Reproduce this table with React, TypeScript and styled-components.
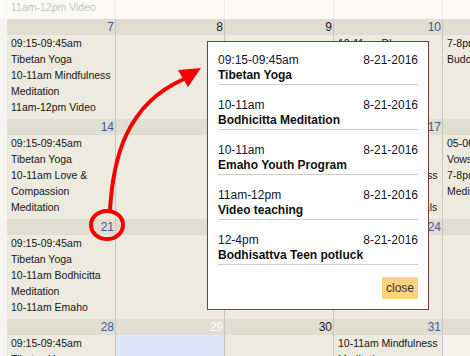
import styled, { createGlobalStyle } from "styled-components";

type Tone = "link" | "plain" | "today";
type Kind = "normal" | "today" | "outside";

interface IDay {
  date: number;
  tone: Tone;
  kind?: Kind;
  events: string[];
}

interface IAgendaItem {
  time: string;
  date: string;
  title: string;
}

const GlobalStyle = createGlobalStyle`
  *, *::before, *::after { box-sizing: border-box; }
  html, body {
    margin: 0;
    padding: 0;
    background: #f5f4ee;
    font-family: "Liberation Sans", Arial, sans-serif;
  }
`;

const Page = styled.div`
  position: relative;
  width: 470px;
  height: 356px;
  overflow: hidden;
  padding-left: 7px;
  background: #f5f4ee;
`;

const Calendar = styled.div`
  display: flex;
  flex-direction: column;
  width: 544px;
`;

const Row = styled.div`
  display: grid;
  grid-template-columns: 108px repeat(4, 109px);
`;

const Day = styled.div`
  display: flex;
  flex-direction: column;
  & + & {
    border-left: 1px solid #c8c6be;
  }
`;

const DayHead = styled.div<{ $tone: Tone }>`
  height: 16px;
  line-height: 16px;
  padding-right: 1px;
  text-align: right;
  font-size: 12px;
  background: #e0ddd1;
  color: ${(p) =>
    p.$tone === "link" ? "#40599a" : p.$tone === "today" ? "#ffffff" : "#1c1c1c"};
`;

const DayBody = styled.div<{ $kind: Kind }>`
  height: 84px;
  overflow: hidden;
  padding: 0 2px 0 4px;
  font-size: 10.5px;
  line-height: 16px;
  color: #161616;
  background: ${(p) =>
    p.$kind === "today" ? "#e0e6fa" : p.$kind === "outside" ? "#f5f4ee" : "#edeadf"};
`;

const TailBody = styled.div`
  height: 19px;
  overflow: hidden;
  display: flex;
  flex-direction: column;
  justify-content: flex-end;
  padding: 0 2px 4px 4px;
  font-size: 10.5px;
  line-height: 16px;
  color: #161616;
  background: #edeadf;
`;

const Event = styled.div``;

const Fade = styled.div`
  position: absolute;
  left: 0;
  top: 0;
  width: 100%;
  height: 19px;
  background: rgba(255, 255, 255, 0.72);
`;

const Pointer = styled.svg`
  position: absolute;
  left: 0;
  top: 0;
  pointer-events: none;
`;

const Popup = styled.div`
  position: absolute;
  left: 207px;
  top: 41px;
  width: 222px;
  padding: 10px;
  background: #ffffff;
  border: 1px solid #7a3b3b;
  color: #111;
  font-size: 12px;
`;

const Item = styled.div`
  padding-bottom: 1px;
  margin-bottom: 12px;
  border-bottom: 1px solid #cccccc;
`;

const Meta = styled.div`
  display: flex;
  justify-content: space-between;
  line-height: 16px;
  color: #10182c;
`;

const Title = styled.div`
  font-weight: bold;
  line-height: 15px;
`;

const Actions = styled.div`
  display: flex;
  justify-content: flex-end;
`;

const CloseButton = styled.button`
  height: 22px;
  padding: 0 4px;
  border: none;
  background: #fed27f;
  color: #333;
  font-family: inherit;
  font-size: 12px;
  line-height: 22px;
  cursor: pointer;
`;

const weeks: IDay[][] = [
  [
    { date: 7, tone: "link", events: ["09:15-09:45am Tibetan Yoga", "10-11am Mindfulness Meditation", "11am-12pm Video teaching"] },
    { date: 8, tone: "plain", events: [] },
    { date: 9, tone: "plain", events: [] },
    { date: 10, tone: "link", events: ["10-11am Dharma Talk"] },
    { date: 11, tone: "link", events: ["7-8pm Medicine Buddha Puja"] },
  ],
  [
    { date: 14, tone: "link", events: ["09:15-09:45am Tibetan Yoga", "10-11am Love & Compassion Meditation"] },
    { date: 15, tone: "plain", events: [] },
    { date: 16, tone: "plain", events: [] },
    { date: 17, tone: "link", events: ["09:15-09:45am Tibetan Yoga", "10-11am Mindfulness Meditation", "7-8pm Fundamentals"] },
    { date: 18, tone: "link", events: ["05-06am Bodhisattva Vows", "7-8pm Mindfulness Meditation"] },
  ],
  [
    { date: 21, tone: "link", events: ["09:15-09:45am Tibetan Yoga", "10-11am Bodhicitta Meditation", "10-11am Emaho Youth Program"] },
    { date: 22, tone: "plain", events: [] },
    { date: 23, tone: "plain", events: [] },
    { date: 24, tone: "link", events: [] },
    { date: 25, tone: "plain", events: [] },
  ],
  [
    { date: 28, tone: "link", events: ["09:15-09:45am Tibetan Yoga"] },
    { date: 29, tone: "today", kind: "today", events: [] },
    { date: 30, tone: "plain", events: [] },
    { date: 31, tone: "link", events: ["10-11am Mindfulness Meditation"] },
    { date: 1, tone: "plain", kind: "outside", events: [] },
  ],
];

const agenda: IAgendaItem[] = [
  { time: "09:15-09:45am", date: "8-21-2016", title: "Tibetan Yoga" },
  { time: "10-11am", date: "8-21-2016", title: "Bodhicitta Meditation" },
  { time: "10-11am", date: "8-21-2016", title: "Emaho Youth Program" },
  { time: "11am-12pm", date: "8-21-2016", title: "Video teaching" },
  { time: "12-4pm", date: "8-21-2016", title: "Bodhisattva Teen potluck" },
];

function App() {
  return (
    <>
      <GlobalStyle />
      <Page>
        <Calendar>
          {/* tail of the previous week, scrolled mostly out of view */}
          <Row>
            <Day>
              <TailBody>
                <Event>11am-12pm Video</Event>
              </TailBody>
            </Day>
            {[0, 1, 2, 3].map((i) => (
              <Day key={i}>
                <TailBody />
              </Day>
            ))}
          </Row>
          {weeks.map((week, w) => (
            <Row key={w}>
              {week.map((day) => (
                <Day key={day.date}>
                  <DayHead $tone={day.tone}>{day.date}</DayHead>
                  <DayBody $kind={day.kind ?? "normal"}>
                    {day.events.map((ev) => (
                      <Event key={ev}>{ev}</Event>
                    ))}
                  </DayBody>
                </Day>
              ))}
            </Row>
          ))}
        </Calendar>
        <Fade />

        <Pointer width="470" height="356" viewBox="0 0 470 356">
          <ellipse cx="107" cy="225" rx="16" ry="14" fill="none" stroke="#f50000" strokeWidth="4" />
          <path d="M110 210 C113 160 125 105 184 79" fill="none" stroke="#f50000" strokeWidth="4" strokeLinecap="round" />
          <polygon points="201,68 178,70 188,87" fill="#f50000" />
        </Pointer>

        <Popup>
          {agenda.map((item, i) => (
            <Item key={i}>
              <Meta>
                <span>{item.time}</span>
                <span>{item.date}</span>
              </Meta>
              <Title>{item.title}</Title>
            </Item>
          ))}
          <Actions>
            <CloseButton>close</CloseButton>
          </Actions>
        </Popup>
      </Page>
    </>
  );
}

export default App;
